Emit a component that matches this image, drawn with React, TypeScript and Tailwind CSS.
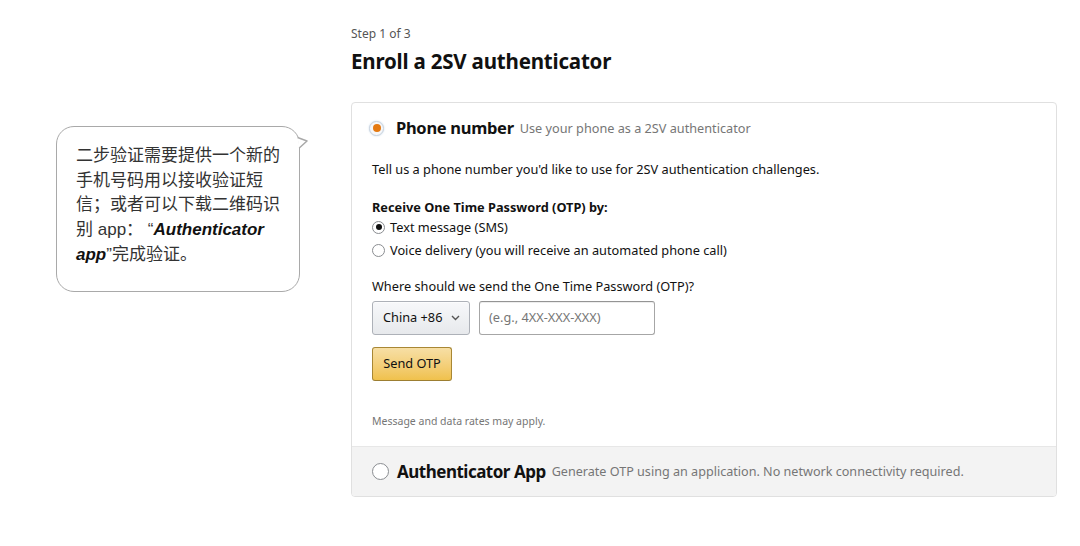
import React from 'react';

const FONT = '"Noto Sans", "Liberation Sans", Arial, sans-serif';
const CJK = '"Liberation Sans", "Noto Sans CJK SC", sans-serif';

function Radio({ checked, big }: { checked?: boolean; big?: boolean }) {
  const size = big ? 'w-[17px] h-[17px]' : 'w-[13px] h-[13px]';
  return (
    <span
      className={`${size} rounded-full border border-[#8a8d91] bg-white flex items-center justify-center shrink-0`}
    >
      {checked && <span className="w-[6px] h-[6px] rounded-full bg-[#111]" />}
    </span>
  );
}

function OrangeRadio() {
  return (
    <span className="w-[15px] h-[15px] rounded-full border border-[#c9d3de] bg-[#f6f7f9] flex items-center justify-center shrink-0 shadow-[0_0_2px_#c8d8e8]">
      <span className="w-[8px] h-[8px] rounded-full bg-[#e47911]" />
    </span>
  );
}

export default function App() {
  return (
    <div className="w-[1080px] h-[546px] bg-white text-[#111] overflow-hidden" style={{ fontFamily: FONT }}>
      <div className="flex items-start pl-[56px] pt-[26px]">
        {/* Note bubble */}
        <div className="relative mt-[100px] w-[244px] h-[166px] shrink-0">
          <div className="w-full h-full rounded-[18px] border-[1.5px] border-[#a9a9a9] pl-[19px] pr-[4px] pt-[17px]">
            <p className="text-[17px] leading-[24.7px] text-[#333] whitespace-nowrap" style={{ fontFamily: CJK }}>
              二步验证需要提供一个新的
              <br />
              手机号码用以接收验证短
              <br />
              信；或者可以下载二维码识
              <br />
              别 app： “<b className="italic text-[#111]">Authenticator</b>
              <br />
              <b className="italic text-[#111]">app</b>”完成验证。
            </p>
          </div>
          <svg className="absolute left-[224px] top-0" width="34" height="32" viewBox="0 0 34 32">
            <polygon points="17.6,11.5 27,15 19.25,22" fill="white" />
            <polyline points="17.6,11.5 27,15 19.25,22" fill="none" stroke="#a9a9a9" strokeWidth="1.5" strokeLinejoin="round" />
          </svg>
        </div>

        {/* Main column */}
        <div className="ml-[51px] w-[706px]">
          <div className="text-[12px] leading-[16px] text-[#555]">Step 1 of 3</div>
          <h1 className="text-[20.5px] leading-[26px] font-bold mt-[6px] tracking-[-0.2px]">Enroll a 2SV authenticator</h1>

          <div className="mt-[28px] border border-[#e0e0e0] rounded-[4px] overflow-hidden">
            <div className="px-[20px] pt-[13px] pb-[18px]">
              <div className="flex items-center h-[24px]">
                <span className="ml-[-3px]"><OrangeRadio /></span>
                <span className="ml-[12px] text-[16.5px] font-bold tracking-[-0.3px]">Phone number</span>
                <span className="ml-[6px] text-[12.7px] text-[#767676] mt-[2px]">Use your phone as a 2SV authenticator</span>
              </div>

              <p className="text-[12.75px] leading-[18px] mt-[20px]">Tell us a phone number you'd like to use for 2SV authentication challenges.</p>

              <p className="text-[12.75px] leading-[18px] font-bold mt-[20px]">Receive One Time Password (OTP) by:</p>
              <div className="flex items-center gap-[5px] text-[12.75px] leading-[20px] mt-[1px]">
                <Radio checked />
                <span>Text message (SMS)</span>
              </div>
              <div className="flex items-center gap-[5px] text-[12.75px] leading-[20px] mt-[3px]">
                <Radio />
                <span>Voice delivery (you will receive an automated phone call)</span>
              </div>

              <p className="text-[12.75px] leading-[18px] mt-[17px]">Where should we send the One Time Password (OTP)?</p>
              <div className="flex items-center gap-[9px] mt-[6px]">
                <div className="w-[98px] h-[34px] rounded-[3px] border border-[#adb1b8] bg-gradient-to-b from-[#f7f8fa] to-[#e7e9ec] flex items-center pl-[10px] text-[12.75px] shadow-[0_1px_0_rgba(255,255,255,0.6)_inset]">
                  <span>China +86</span>
                  <svg className="ml-[9px]" width="9" height="6" viewBox="0 0 9 6">
                    <path d="M1 1 L4.5 4.5 L8 1" fill="none" stroke="#555" strokeWidth="1.4" />
                  </svg>
                </div>
                <div className="w-[176px] h-[34px] rounded-[3px] border border-[#a6a6a6] border-t-[#949494] flex items-center pl-[9px] text-[12.75px] text-[#767676] shadow-[0_1px_0_rgba(0,0,0,0.07)_inset]">
                  (e.g., 4XX-XXX-XXX)
                </div>
              </div>

              <button className="mt-[12px] w-[80px] h-[34px] rounded-[3px] border border-[#a88734] border-b-[#9c7e31] bg-gradient-to-b from-[#f7dfa5] to-[#f0c14b] text-[12.75px] text-[#111] flex items-center justify-center">
                Send OTP
              </button>

              <p className="text-[10.5px] leading-[14px] text-[#767676] mt-[33px]">Message and data rates may apply.</p>
            </div>

            <div className="bg-[#f3f3f3] border-t border-[#e7e7e7] h-[50px] flex items-center px-[20px]">
              <Radio big />
              <span className="ml-[8px] text-[17px] font-bold tracking-[-0.5px]">Authenticator App</span>
              <span className="ml-[6px] text-[12.6px] text-[#767676] mt-[2px]">Generate OTP using an application. No network connectivity required.</span>
            </div>
          </div>
        </div>
      </div>
    </div>
  );
}
